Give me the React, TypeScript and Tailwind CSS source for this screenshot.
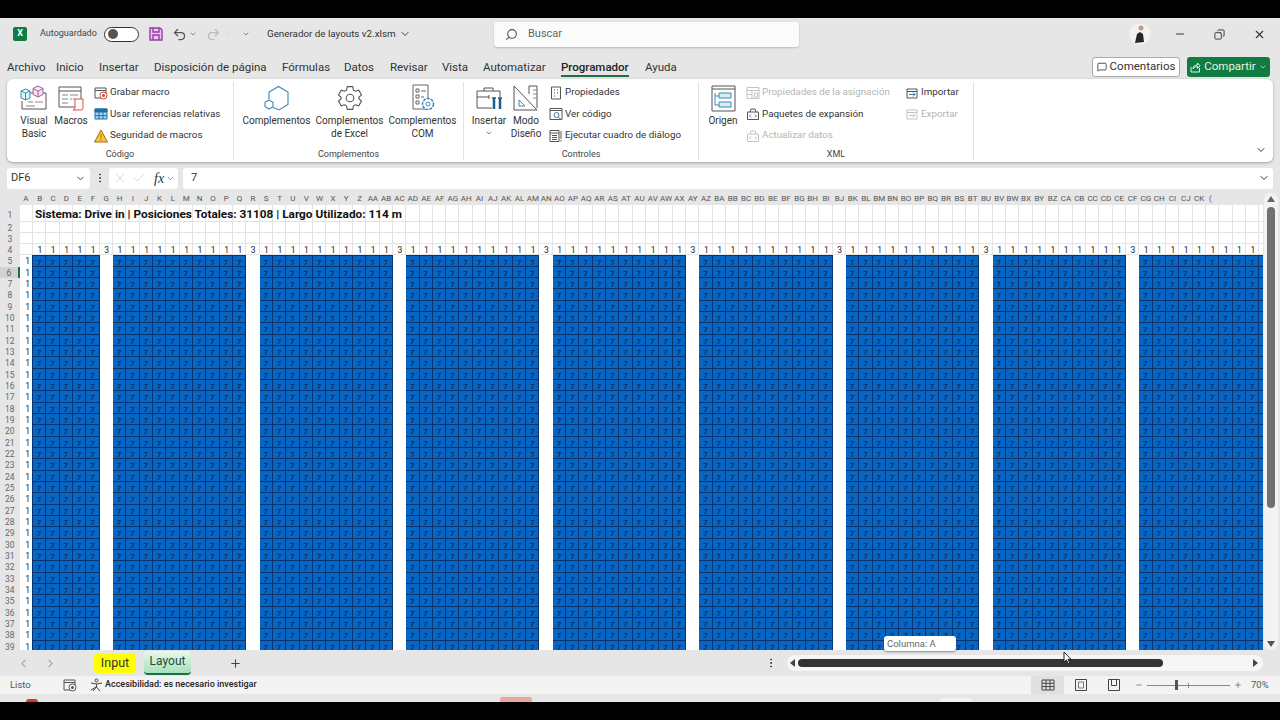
import { ChevronDown, ChevronLeft, ChevronRight, Copy, Minus, MoreVertical, Plus, Search, Undo2, Redo2, X, Check, MessageSquare } from "lucide-react";

const FONT = "font-['Roboto','Noto_Sans',sans-serif]";

function colName(i: number) {
  const a = "ABCDEFGHIJKLMNOPQRSTUVWXYZ";
  if (i < 26) return a[i];
  return a[Math.floor(i / 26) - 1] + a[i % 26];
}

const COLS = Array.from({ length: 94 }, (_, i) => i);
const isGap = (i: number) => i % 11 === 6;
// the last column only peeks in at the window edge, so it stays empty
const LAST = 93;

function RibbonSmall({ icon, label, off }: { icon: React.ReactNode; label: string; off?: boolean }) {
  return (
    <div className={`flex items-center h-[21.5px] gap-[2px] text-[9.8px] whitespace-nowrap ${off ? "text-[#b4b4b4]" : "text-[#333]"}`}>
      <span className="w-[15px] h-[15px] shrink-0 flex items-center justify-center">{icon}</span>
      <span>{label}</span>
    </div>
  );
}

function RibbonBig({ icon, lines, width, arrow }: { icon: React.ReactNode; lines: string[]; width: string; arrow?: boolean }) {
  return (
    <div className={`flex flex-col items-center text-[10px] leading-[13px] text-[#333] text-center ${width}`}>
      <div className="h-[28px] flex items-center justify-center">{icon}</div>
      <div className="mt-[2px] whitespace-nowrap">{lines[0]}</div>
      {lines[1] && <div className="whitespace-nowrap">{lines[1]}</div>}
      {arrow && <ChevronDown className="mt-[2px] w-[8px] h-[8px] text-[#444]" />}
    </div>
  );
}

function Group({ label, width, children }: { label: string; width: string; children: React.ReactNode }) {
  return (
    <div className={`flex flex-col h-full border-r border-[#e2e2e2] shrink-0 ${width}`}>
      <div className="h-[66px] flex">{children}</div>
      <div className="text-[9px] leading-[12px] text-[#444] text-center">{label}</div>
    </div>
  );
}

function VbIcon() {
  return (
    <svg width="28" height="26" viewBox="0 0 28 26" fill="none" stroke="#555" strokeWidth="1">
      <path d="M6 8h20v16H2v-8" />
      <path d="M8 17h5M15 17h8M6 21h9" stroke="#888" />
      <path d="M1 6l4.500-2L10 6v7l-4.500 2L1 13zM1 6l4.500 2L10 6M5.500 8v7" fill="#e4f3f8" stroke="#2f8fb0" />
      <path d="M13 3.500L18 1l5 2.500v6L18 12l-5-2.500zM13 3.500L18 6l5-2.500M18 6v6" fill="#f6e3f1" stroke="#a95a98" />
    </svg>
  );
}

function MacroIcon() {
  return (
    <svg width="26" height="26" viewBox="0 0 26 26" fill="none" stroke="#555" strokeWidth="1">
      <path d="M1 2h22v20H1zM1 6h22" />
      <path d="M4 10h6M12 10h8M4 14h6M12 14h2M4 18h6" stroke="#888" />
      <path d="M15 14h10M17 14v9a2 2 0 0 1-2 2h8a2 2 0 0 0 2-2v-9" fill="#fff" stroke="#d9503f" />
    </svg>
  );
}

function HexIcon() {
  return (
    <svg width="26" height="26" viewBox="0 0 26 26" fill="none" stroke="#3b87b8" strokeWidth="1.100">
      <path d="M9 22.500l6 2.500 9-5.500V7L14.500 1.500 5 7v7" />
      <path d="M5 15l4 2.300v4.400L5 24l-4-2.300v-4.400z" />
    </svg>
  );
}

function GearIcon() {
  return (
    <svg width="26" height="26" viewBox="0 0 24 24" fill="none" stroke="#555" strokeWidth="1">
      <circle cx="12" cy="12" r="3.500" />
      <path d="M9.500 1.500h5l.7 3.300 1.800 1 3.100-1 2.500 4.300-2.400 2.200v1.400l2.400 2.200-2.500 4.300-3.100-1-1.800 1-.7 3.300h-5l-.7-3.300-1.800-1-3.100 1-2.500-4.300 2.400-2.200v-1.400L1.400 9.100l2.500-4.300 3.100 1 1.800-1z" />
    </svg>
  );
}

function ComIcon() {
  return (
    <svg width="26" height="28" viewBox="0 0 26 28" fill="none" stroke="#666" strokeWidth="1">
      <path d="M3 1h15v24H3z" />
      <path d="M6 5h3v3H6zM6 11h3v3H6zM6 17h3v3H6zM11 7h5M11 13h3" />
      <circle cx="18" cy="20" r="5.500" fill="#fff" stroke="#3b87b8" strokeDasharray="3 1" strokeWidth="1.500" />
      <circle cx="18" cy="20" r="2" stroke="#3b87b8" />
    </svg>
  );
}

function ToolboxIcon() {
  return (
    <svg width="28" height="26" viewBox="0 0 28 26" fill="none" stroke="#555" strokeWidth="1">
      <path d="M9 6V3h9v3M17 23H2V6h23v6M2 12h12" />
      <path d="M14 10v4" />
      <path d="M19 13v11M25 13v11" stroke="#1d5f87" strokeWidth="2.500" />
      <path d="M17 13h4M23 13h4" stroke="#1d5f87" strokeWidth="1.500" />
    </svg>
  );
}

function DesignIcon() {
  return (
    <svg width="26" height="28" viewBox="0 0 26 28" fill="none" stroke="#555" strokeWidth="1">
      <path d="M1 2l23 24H1z" />
      <path d="M6 16l6 6H6z" stroke="#3b87b8" />
      <path d="M16 10V2h8v22" />
      <path d="M20 6h4M20 10h4M20 14h4" stroke="#888" />
    </svg>
  );
}

function OrigenIcon() {
  return (
    <svg width="25" height="27" viewBox="0 0 25 27" fill="none" stroke="#555" strokeWidth="1">
      <path d="M1 1h23v25H1zM1 4h23" />
      <path d="M8 8h12v5H8zM8 17h12v5H8z" fill="#dcecf5" stroke="#2f8fb0" />
      <path d="M4 8v12h4M4 11h4" stroke="#2f8fb0" />
    </svg>
  );
}

function Mini({ kind, off }: { kind: string; off?: boolean }) {
  const s = off ? "#c4c4c4" : "#555";
  const b = off ? "#c4c4c4" : "#2f7fb5";
  return (
    <svg width="14" height="14" viewBox="0 0 14 14" fill="none" stroke={s} strokeWidth="1">
      {kind === "rec" && (
        <>
          <path d="M1 2h11v10H1zM1 4.500h11" />
          <circle cx="9.500" cy="9.500" r="3.500" fill="#fff" stroke="#c9453a" />
          <circle cx="9.500" cy="9.500" r="1.500" fill="#c9453a" stroke="none" />
        </>
      )}
      {kind === "macro" && (
        <>
          <path d="M1 2h11v10H1zM1 4.500h11" />
          <circle cx="9.500" cy="9.500" r="3.500" fill="#fff" />
          <circle cx="9.500" cy="9.500" r="1.500" fill="#555" stroke="none" />
        </>
      )}
      {kind === "rel" && (
        <>
          <path d="M1 2h12v10H1z" fill="#a9d3ee" stroke="#1f6fa8" />
          <path d="M1 2h12v3H1z" fill="#1f6fa8" stroke="#1f6fa8" />
          <path d="M1 8.600h12M5 2v10M9 2v10" stroke="#1f6fa8" />
        </>
      )}
      {kind === "warn" && <path d="M7 1l6.500 12H.5z M7 5v4M7 10v1.500" fill="#f4c542" stroke="#a86a12" />}
      {kind === "prop" && <path d="M2.500 1h9v12h-9zM5 4h1M5 7h1M5 10h1M8 4h1M8 7h1" />}
      {kind === "code" && (
        <>
          <path d="M1 1.500h12v11H1zM1 3.500h12" />
          <circle cx="7.500" cy="8" r="2.500" stroke={b} />
          <path d="M9.500 10l3 3" stroke={b} />
        </>
      )}
      {kind === "run" && <path d="M1 1.500h9v11H1zM1 4h9M3 6.500h5M3 8.500h5M3 10.500h5M12 2v8M12 11v1.500" />}
      {kind === "map" && <path d="M1 1.500h12v11H1zM1 4.500h12M6 4.500v8M8.500 7h3v4h-3zM1 8.500h5" />}
      {kind === "pack" && (
        <>
          <path d="M1.500 5h11v7.500h-11zM4 5l1-3h4l1 3" />
          <path d="M5 7.500L3.500 9 5 10.500M9 7.500l1.500 1.500L9 10.500" stroke={b} />
        </>
      )}
      {kind === "imp" && (
        <>
          <path d="M2 3h10v9H2zM2 5.500h10" />
          <path d="M4 8.500h6M8 6.500l2 2-2 2" stroke={b} />
        </>
      )}
      {kind === "grid" && <path d="M1 2h12v10H1zM1 5.300h12M1 8.600h12M5 2v10M9 2v10" stroke="#444" />}
      {kind === "page" && (
        <>
          <path d="M1.500 1.500h11v11h-11z" stroke="#444" />
          <path d="M4.500 4h5v6h-5z" stroke="#777" />
        </>
      )}
      {kind === "brk" && <path d="M1.500 1.500h11v11h-11zM4.500 1.500v6h5v-6" stroke="#444" />}
    </svg>
  );
}

function Ribbon() {
  return (
    <div className="mx-[7px] h-[83px] bg-white rounded-[6px] shadow-[0_1px_3px_rgba(0,0,0,0.3)] flex pt-[3px] pb-[2px] relative shrink-0">
      <Group label="Código" width="w-[227px]">
        <div className="flex pt-[2px]">
          <div className="pl-[7px]"><RibbonBig icon={<VbIcon />} lines={["Visual", "Basic"]} width="w-[40px]" /></div>
          <RibbonBig icon={<MacroIcon />} lines={["Macros"]} width="w-[34px]" />
        </div>
        <div className="pl-[5px]">
          <RibbonSmall icon={<Mini kind="rec" />} label="Grabar macro" />
          <RibbonSmall icon={<Mini kind="rel" />} label="Usar referencias relativas" />
          <RibbonSmall icon={<Mini kind="warn" />} label="Seguridad de macros" />
        </div>
      </Group>
      <Group label="Complementos" width="w-[230px]">
        <div className="flex pt-[2px] pl-[6px]">
          <RibbonBig icon={<HexIcon />} lines={["Complementos"]} width="w-[73px]" />
          <RibbonBig icon={<GearIcon />} lines={["Complementos", "de Excel"]} width="w-[73px]" />
          <RibbonBig icon={<ComIcon />} lines={["Complementos", "COM"]} width="w-[73px]" />
        </div>
      </Group>
      <Group label="Controles" width="w-[235px]">
        <div className="flex pt-[2px] pl-[3px]">
          <RibbonBig icon={<ToolboxIcon />} lines={["Insertar"]} arrow width="w-[44px]" />
          <RibbonBig icon={<DesignIcon />} lines={["Modo", "Diseño"]} width="w-[30px]" />
        </div>
        <div className="pl-[7px]">
          <RibbonSmall icon={<Mini kind="prop" />} label="Propiedades" />
          <RibbonSmall icon={<Mini kind="code" />} label="Ver código" />
          <RibbonSmall icon={<Mini kind="run" />} label="Ejecutar cuadro de diálogo" />
        </div>
      </Group>
      <Group label="XML" width="w-[275px]">
        <div className="flex pt-[2px] pl-[6px]">
          <RibbonBig icon={<OrigenIcon />} lines={["Origen"]} width="w-[36px]" />
        </div>
        <div className="pl-[4px] w-[160px]">
          <RibbonSmall off icon={<Mini kind="map" off />} label="Propiedades de la asignación" />
          <RibbonSmall icon={<Mini kind="pack" />} label="Paquetes de expansión" />
          <RibbonSmall off icon={<Mini kind="pack" off />} label="Actualizar datos" />
        </div>
        <div className="pl-[3px]">
          <RibbonSmall icon={<Mini kind="imp" />} label="Importar" />
          <RibbonSmall off icon={<Mini kind="imp" off />} label="Exportar" />
        </div>
      </Group>
      <ChevronDown className="absolute right-[6px] bottom-[6px] w-[12px] h-[12px] text-[#333]" />
    </div>
  );
}

function TitleBar() {
  return (
    <div className="h-[32px] flex items-center text-[#444] shrink-0">
      <div className="ml-[13px] w-[14px] h-[14px] rounded-[2px] bg-[#107c41] text-white text-[9px] font-bold flex items-center justify-center">X</div>
      <span className="ml-[13px] w-[58px] text-[9px] whitespace-nowrap">Autoguardado</span>
      <div className="ml-[6px] w-[35px] h-[15px] rounded-full border border-[#333] bg-white flex items-center pl-[3px]">
        <div className="w-[10px] h-[10px] rounded-full bg-[#555]" />
      </div>
      <svg className="ml-[10px]" width="14" height="14" viewBox="0 0 14 14" fill="#e8c8ee" stroke="#9a3aa8" strokeWidth="1.400">
        <path d="M1 1h10l2 2v10H1z" />
        <path d="M4 1v4h6V1M4 13V8h6v5" fill="none" />
      </svg>
      <Undo2 className="ml-[9px] w-[15px] h-[15px] text-[#555]" />
      <ChevronDown className="ml-[2px] w-[8px] h-[8px] text-[#555]" />
      <Redo2 className="ml-[9px] w-[15px] h-[15px] text-[#bbb]" />
      <ChevronDown className="ml-[2px] w-[8px] h-[8px] text-[#ccc]" />
      <ChevronDown className="ml-[11px] w-[8px] h-[8px] text-[#555]" />
      <span className="ml-[17px] w-[130px] text-[9.8px] text-[#333] whitespace-nowrap">Generador de layouts v2.xlsm</span>
      <ChevronDown className="ml-[2px] w-[12px] h-[12px] text-[#444]" />
      <div className="ml-[83px] w-[305px] h-[25px] bg-[#fbfbfb] rounded-[3px] shadow-[0_1px_2px_rgba(0,0,0,0.2)] flex items-center pl-[11px] text-[11px] text-[#666]">
        <Search className="w-[13px] h-[13px] -scale-x-100 text-[#555]" />
        <span className="ml-[10px]">Buscar</span>
      </div>
      <div className="ml-auto flex items-center">
        <svg width="22" height="22" viewBox="0 0 22 22">
          <circle cx="11" cy="11" r="10.500" fill="#f2f2f2" />
          <path d="M6 20l2-9 3-2 3 2 1 8z" fill="#26262a" />
          <circle cx="12" cy="5" r="2.500" fill="#c79a80" />
        </svg>
        <Minus className="ml-[23px] w-[12px] h-[12px] text-[#333]" />
        <Copy className="ml-[28px] w-[11px] h-[11px] -scale-x-100 text-[#333]" />
        <X className="ml-[28px] mr-[14px] w-[13px] h-[13px] text-[#333]" />
      </div>
    </div>
  );
}

function TabRow() {
  return (
    <div className="h-[29px] flex items-center pt-[5px] pl-[7px] text-[11.5px] text-[#333] shrink-0">
      <div className="flex whitespace-nowrap pt-[2px]">
        <span className="w-[49px]">Archivo</span>
        <span className="w-[43px]">Inicio</span>
        <span className="w-[55px]">Insertar</span>
        <span className="w-[128px]">Disposición de página</span>
        <span className="w-[62px]">Fórmulas</span>
        <span className="w-[46px]">Datos</span>
        <span className="w-[52px]">Revisar</span>
        <span className="w-[41px]">Vista</span>
        <span className="w-[78px]">Automatizar</span>
        <span className="w-[84px]">
          <span className="inline-block font-medium text-[#222] border-b-2 border-[#1c6e45] h-[18px]">Programador</span>
        </span>
        <span>Ayuda</span>
      </div>
      <div className="ml-auto mr-[10px] flex items-center gap-[7px]">
        <div className="h-[20px] w-[88px] bg-white border border-[#aaa] rounded-[3px] flex items-center justify-center gap-[3px] text-[11.5px]">
          <MessageSquare className="w-[10px] h-[10px]" />
          Comentarios
        </div>
        <div className="h-[20px] w-[83px] bg-[#107c41] rounded-[3px] flex items-center justify-center gap-[3px] text-[11.5px] text-[#e4f5ea]">
          <svg width="11" height="11" viewBox="0 0 11 11" fill="none" stroke="#e4f5ea" strokeWidth="1">
            <path d="M1 5v5h8.500V6M3 7c0-3 2-4 4.500-4V1L10 3.800 7.500 6.500v-2C5.500 4.500 4 5.500 3 7z" />
          </svg>
          Compartir
          <ChevronDown className="w-[8px] h-[8px]" />
        </div>
      </div>
    </div>
  );
}

function FormulaBar() {
  return (
    <div className="h-[22px] mt-[5px] flex items-center px-[7px] shrink-0 text-[#333]">
      <div className="w-[83px] h-[21px] bg-white rounded-[3px] flex items-center justify-between pl-[4px] pr-[4px] text-[11px] pt-[1px]">
        DF6
        <ChevronDown className="w-[11px] h-[11px]" />
      </div>
      <MoreVertical className="mx-[3.5px] w-[12px] h-[12px] text-[#333]" />
      <div className="w-[69px] h-[21px] bg-white rounded-[3px] flex items-center pl-[4px] text-[#bbb]">
        <X className="w-[14px] h-[14px]" strokeWidth={1} />
        <Check className="ml-[5px] w-[14px] h-[14px]" strokeWidth={1} />
        <span className="ml-[8px] font-['Liberation_Serif',serif] italic text-[14px] text-[#333]">fx</span>
        <ChevronDown className="ml-[2px] w-[9px] h-[9px] text-[#777]" />
      </div>
      <div className="ml-[5px] flex-1 h-[21px] bg-white rounded-[3px] flex items-center justify-between pl-[8px] pr-[3px] text-[11px]">
        7
        <ChevronDown className="w-[12px] h-[12px]" />
      </div>
    </div>
  );
}

function ColHeader() {
  return (
    <div className="h-[12px] ml-[18.5px] flex text-[8px] leading-[12px] text-[#555] shrink-0">
      <div className="w-[14.5px] shrink-0 text-center">A</div>
      {COLS.slice(1, 89).map((i) => (
        <div key={i} className="w-[13.33px] shrink-0 text-center whitespace-nowrap">
          {colName(i)}
        </div>
      ))}
      <div className="pl-[3px]">(</div>
    </div>
  );
}

function RowNum({ n }: { n: number }) {
  return (
    <div className={`w-[19.67px] shrink-0 text-center text-[8.5px] text-[#666] ${n === 6 ? "bg-[#d2d2d2] border-r-2 border-[#1c6e45]" : ""}`}>
      {n}
    </div>
  );
}

function BlankRow({ n, tall }: { n: number; tall?: boolean }) {
  return (
    <div className={`flex ${tall ? "h-[16.5px] leading-[20px]" : "h-[11.33px] leading-[13.5px]"}`}>
      <RowNum n={n} />
      <div className="flex flex-1 bg-white border-b border-[#e3e3e3] overflow-hidden">
        {COLS.map((i) => (
          <div key={i} className="w-[13.33px] shrink-0 border-r border-[#e3e3e3] text-right pr-[3px] text-[8.5px] text-[#222]">
            {n === 4 && i > 0 && i < LAST ? (isGap(i) ? "3" : "1") : ""}
          </div>
        ))}
      </div>
    </div>
  );
}

function DataRow({ n }: { n: number }) {
  return (
    <div className="flex h-[11.33px] leading-[13px]">
      <RowNum n={n} />
      <div className="flex flex-1 bg-white overflow-hidden text-[8px]">
        {COLS.map((i) =>
          i === 0 ? (
            <div key={i} className="w-[13.33px] shrink-0 text-right pr-[2px] text-[8.5px] text-[#222] border-r border-[#083570]">1</div>
          ) : isGap(i) ? (
            <div key={i} className="w-[13.33px] shrink-0 bg-white" />
          ) : (
            <div key={i} className={`w-[13.33px] shrink-0 text-center font-bold bg-[#0766c4] text-[#0a3068] border-r border-b border-[#083570] ${n === 5 ? "border-t" : ""}`}>{i < LAST ? "7" : ""}</div>
          )
        )}
      </div>
    </div>
  );
}

function Sheet() {
  const rows = Array.from({ length: 35 }, (_, i) => i + 5);
  return (
    <div className="h-[445px] overflow-hidden relative shrink-0">
      <BlankRow n={1} tall />
      <BlankRow n={2} />
      <BlankRow n={3} />
      <BlankRow n={4} />
      {rows.map((n) => (
        <DataRow key={n} n={n} />
      ))}
      <div className="absolute left-[35px] top-[2px] text-[11.8px] leading-[14px] font-bold text-[#111] whitespace-nowrap">
        Sistema: Drive in | Posiciones Totales: 31108 | Largo Utilizado: 114 m
      </div>
    </div>
  );
}

function VScroll() {
  return (
    <div className="ml-[1px] w-[14px] h-[457px] bg-[#f3f3f3] rounded-full flex flex-col items-center shrink-0">
      <div className="mt-[3px] w-0 h-0 border-x-[4px] border-x-transparent border-b-[6px] border-b-[#666]" />
      <div className="mt-[5px] w-[8px] h-[301px] rounded-full bg-[#707070]" />
      <div className="mt-auto mb-[3px] w-0 h-0 border-x-[4px] border-x-transparent border-t-[6px] border-t-[#555]" />
    </div>
  );
}

function SheetTabs() {
  return (
    <div className="h-[26px] flex items-center shrink-0">
      <ChevronLeft className="ml-[17px] w-[13px] h-[13px] text-[#aaa]" />
      <ChevronRight className="ml-[14px] w-[13px] h-[13px] text-[#aaa]" />
      <div className="ml-[37px] w-[42px] h-[20px] bg-[#ffff00] rounded-[4px] flex items-center justify-center text-[12.5px] text-[#333]">Input</div>
      <div className="ml-[8px] w-[47px] h-[24px] -mt-[1px] pb-[2px] rounded-[4px] bg-gradient-to-b from-[#eaf7ef] to-[#a7e0bd] flex items-center justify-center text-[12px] text-[#1e4d35] border-b-2 border-b-[#1c6e45]">Layout</div>
      <Plus className="ml-[38px] w-[13px] h-[13px] text-[#444]" />
      <MoreVertical className="ml-[523px] w-[12px] h-[12px] text-[#333]" />
      <div className="ml-[10px] w-[476px] h-[16px] bg-[#f6f6f6] rounded-full flex items-center px-[3px]">
        <div className="w-0 h-0 border-y-[4px] border-y-transparent border-r-[5px] border-r-[#444]" />
        <div className="ml-[3px] w-[365px] h-[8px] rounded-full bg-[#333]" />
        <div className="ml-auto mr-[2px] w-0 h-0 border-y-[4px] border-y-transparent border-l-[5px] border-l-[#444]" />
      </div>
    </div>
  );
}

function StatusBar() {
  return (
    <div className="h-[18px] bg-[#f3f3f3] flex items-center text-[9.5px] text-[#555] shrink-0">
      <span className="ml-[10px] w-[53px]">Listo</span>
      <Mini kind="macro" />
      <svg className="ml-[13px]" width="13" height="14" viewBox="0 0 13 14" fill="none" stroke="#444" strokeWidth="1">
        <circle cx="6.500" cy="2.500" r="1.500" />
        <path d="M1 5l5.500 1L12 5M6.500 6v3M6.500 9L3 13M6.500 9l3.500 4M1 12l5-3" />
      </svg>
      <span className="ml-[2px] text-[9px] font-medium text-[#222] whitespace-nowrap">Accesibilidad: es necesario investigar</span>
      <div className="ml-auto w-[249px] flex items-center h-full">
        <div className="w-[33px] h-full bg-[#e0e0e0] flex items-center justify-center"><Mini kind="grid" /></div>
        <div className="w-[33px] flex justify-center"><Mini kind="page" /></div>
        <div className="w-[33px] flex justify-center"><Mini kind="brk" /></div>
        <Minus className="ml-[5px] w-[8px] h-[8px]" />
        <div className="mx-[4px] w-[83px] h-px bg-[#888] flex items-center">
          <div className="ml-[28px] w-[3px] h-[10px] bg-[#555]" />
          <div className="ml-[10px] w-px h-[5px] bg-[#888]" />
        </div>
        <Plus className="w-[8px] h-[8px]" />
        <span className="ml-[9px] text-[9.5px]">70%</span>
      </div>
    </div>
  );
}

export default function App() {
  return (
    <div className={`${FONT} w-[1280px] h-[720px] bg-black overflow-hidden flex flex-col`}>
      <div className="h-[18px] shrink-0" />
      <div className="h-[684px] bg-[#e6e6e6] flex flex-col shrink-0 relative">
        <TitleBar />
        <TabRow />
        <Ribbon />
        <FormulaBar />
        <div className="mt-[4px] flex shrink-0">
          <div className="w-[1263px] shrink-0 overflow-hidden">
            <ColHeader />
            <Sheet />
          </div>
          <VScroll />
        </div>
        <SheetTabs />
        <StatusBar />
        {/* floating bits: tooltip, mouse pointer, taskbar icons peeking under the window */}
        <div className="absolute left-[884px] top-[618px] w-[72px] h-[15px] bg-white rounded-[3px] shadow-[0_1px_2px_rgba(0,0,0,0.4)] text-[9.5px] leading-[15px] pl-[3px] text-[#666]">Columna: A</div>
        <svg className="absolute left-[1063px] top-[633px]" width="9" height="14" viewBox="0 0 9 14" fill="#fff" stroke="#222" strokeWidth="1">
          <path d="M1 1v10l2.500-2 2 4 1.500-.7-2-4H8z" />
        </svg>
        <div className="absolute left-[26px] top-[681px] w-[12px] h-[3px] rounded-t-full bg-[#d9382e]" />
        <div className="absolute left-[940px] top-[680px] w-[32px] h-[4px] rounded-t-[3px] bg-[#f2f2f2]" />
        <div className="absolute left-[500px] top-[679px] w-[32px] h-[5px] rounded-t-[3px] bg-[#e8a79b]" />
      </div>
    </div>
  );
}
